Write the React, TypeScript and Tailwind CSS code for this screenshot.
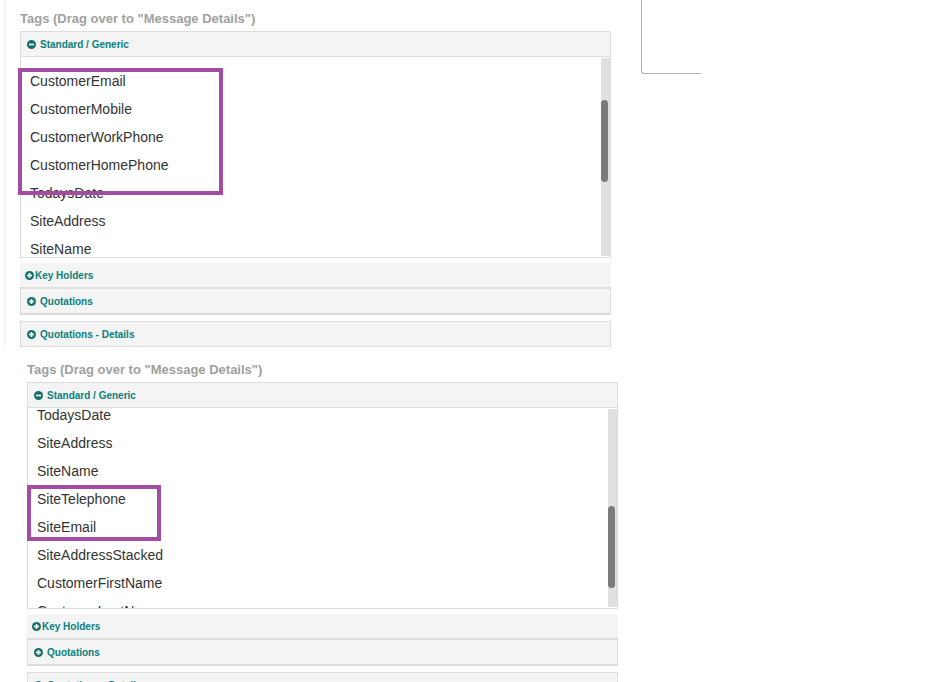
import * as React from 'react'

const font = { fontFamily: '"Liberation Sans", Arial, sans-serif' }

function CircleIcon({ plus = false }: { plus?: boolean }) {
  return (
    <svg width="9" height="9" viewBox="0 0 16 16" className="shrink-0">
      <circle cx="8" cy="8" r="8" fill="#13716d" />
      <rect x="3.5" y="6.5" width="9" height="3" fill="#fff" />
      {plus && <rect x="6.5" y="3.5" width="3" height="9" fill="#fff" />}
    </svg>
  )
}

function PanelHeader({
  label,
  plus = true,
  tight = false,
  className = '',
}: {
  label: string
  plus?: boolean
  tight?: boolean
  className?: string
}) {
  return (
    <div
      className={
        'flex h-[26px] items-center bg-[#f4f4f4] text-[10px] font-bold text-[#0a807c] ' +
        (tight ? 'gap-[1px] pl-[5px] ' : 'gap-[4px] pl-[6px] ') +
        className
      }
    >
      <CircleIcon plus={plus} />
      <span>{label}</span>
    </div>
  )
}

function TagList({
  items,
  offset,
  thumbTop,
}: {
  items: string[]
  offset: string
  thumbTop: string
}) {
  return (
    <div className="flex h-[201px] border-x border-b border-[#ddd] bg-white">
      <div className="flex-1 overflow-hidden">
        <ul className={'pl-[9px] text-[14px] leading-[28px] text-[#333] ' + offset}>
          {items.map((item) => (
            <li key={item} className="h-[28px]">
              {item}
            </li>
          ))}
        </ul>
      </div>
      <div className="mt-[1px] mb-[1px] w-[9px] bg-[#e0e0e0]">
        <div className={'h-[82px] w-[7px] rounded-full bg-[#7b7b7b] ' + thumbTop} />
      </div>
    </div>
  )
}

function TagsBlock({
  items,
  offset,
  thumbTop,
}: {
  items: string[]
  offset: string
  thumbTop: string
}) {
  return (
    <div className="w-[591px]">
      <div className="mb-[4px] h-[16px] text-[13px] leading-[16px] font-bold text-[#a0a0a0]">
        Tags (Drag over to "Message Details")
      </div>
      <PanelHeader label="Standard / Generic" plus={false} className="border border-[#ddd]" />
      <TagList items={items} offset={offset} thumbTop={thumbTop} />
      <PanelHeader
        label="Key Holders"
        tight
        className="mt-[5px] rounded-t-[3px] border-b-2 border-[#dcdcdc]"
      />
      <PanelHeader label="Quotations" className="border-x border-b-2 border-[#dcdcdc]" />
      <PanelHeader label="Quotations - Details" className="mt-[6px] border border-[#ddd]" />
    </div>
  )
}

export default function App() {
  return (
    <div className="h-[682px] w-[936px] overflow-hidden bg-white" style={font}>
      {/* first capture */}
      <div className="relative flex h-[346px] w-[701px]">
        <div className="ml-[4px] h-full border-l border-[#eee] pt-[11px] pl-[15px]">
          <TagsBlock
            items={[
              'CustomerEmail',
              'CustomerMobile',
              'CustomerWorkPhone',
              'CustomerHomePhone',
              'TodaysDate',
              'SiteAddress',
              'SiteName',
              'SiteTelephone',
            ]}
            offset="mt-[10px]"
            thumbTop="mt-[42px]"
          />
        </div>
        <div className="ml-[30px] h-[74px] flex-1 rounded-bl-[3px] border-b border-l border-[#b0b0b0]" />
        <div className="absolute top-[68px] left-[18px] h-[127px] w-[205px] border-4 border-[#a24ca4]" />
      </div>

      {/* second capture */}
      <div className="relative pt-[16px] pl-[27px]">
        <TagsBlock
          items={[
            'TodaysDate',
            'SiteAddress',
            'SiteName',
            'SiteTelephone',
            'SiteEmail',
            'SiteAddressStacked',
            'CustomerFirstName',
            'CustomerLastName',
          ]}
          offset="-mt-[7px]"
          thumbTop="mt-[97px]"
        />
        <div className="absolute top-[139px] left-[27px] h-[56px] w-[134px] border-4 border-[#a24ca4]" />
      </div>
    </div>
  )
}
